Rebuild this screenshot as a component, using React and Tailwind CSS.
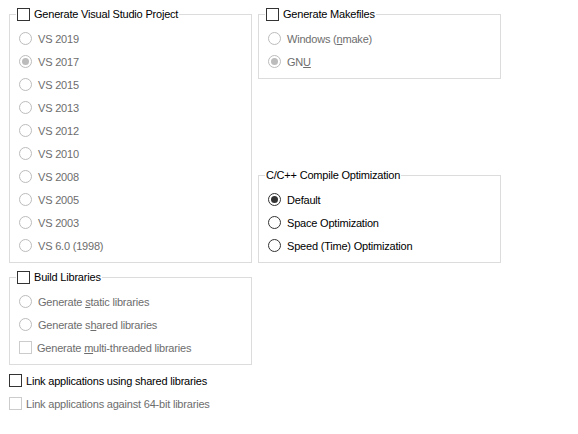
import React from "react";

const Radio = ({ label, checked, disabled }) => (
  <div className="flex items-center h-[23px]">
    <span
      className={`w-[13px] h-[13px] rounded-full border flex items-center justify-center bg-white shrink-0 ${
        disabled ? "border-[#bcbcbc]" : "border-[#333333]"
      }`}
    >
      {checked && (
        <span className={`w-[7px] h-[7px] rounded-full ${disabled ? "bg-[#bcbcbc]" : "bg-[#333333]"}`} />
      )}
    </span>
    <span className={`ml-[6px] whitespace-nowrap ${disabled ? "text-[#6d6d6d]" : "text-black"}`}>{label}</span>
  </div>
);

const Check = ({ label, disabled, gap = "ml-[4px]" }) => (
  <div className="flex items-center">
    <span
      className={`w-[13px] h-[13px] border bg-white shrink-0 ${disabled ? "border-[#cccccc]" : "border-[#333333]"}`}
    />
    <span className={`${gap} whitespace-nowrap ${disabled ? "text-[#6d6d6d]" : "text-black"}`}>{label}</span>
  </div>
);

// fieldset padding moves the legend too, so the inner spacing lives on a div
const GroupBox = ({ title, children, className = "", inner = "" }) => (
  <fieldset className={`border border-[#dcdcdc] ${className}`}>
    <legend className="ml-[6px] px-[1px] h-[14px] leading-[14px]">{title}</legend>
    <div className={`pl-[9px] pt-[6px] ${inner}`}>{children}</div>
  </fieldset>
);

const u = (s) => <span className="underline underline-offset-[1px]">{s}</span>;

export default function App() {
  const vsVersions = [
    ["VS 2019", false],
    ["VS 2017", true],
    ["VS 2015", false],
    ["VS 2013", false],
    ["VS 2012", false],
    ["VS 2010", false],
    ["VS 2008", false],
    ["VS 2005", false],
    ["VS 2003", false],
    ["VS 6.0 (1998)", false],
  ];

  return (
    <div
      className="w-[578px] h-[434px] bg-white text-[11px] leading-[14px] tracking-[-0.2px] pt-[7px] pl-[9px] text-black"
      style={{ fontFamily: '"Liberation Sans", Arial, sans-serif' }}
    >
      <div className="flex gap-[6px]">
        <GroupBox title={<Check label="Generate Visual Studio Project" />} className="w-[243px]" inner="pb-[5px]">
          {vsVersions.map(([v, c]) => (
            <Radio key={v} label={v} checked={c} disabled />
          ))}
        </GroupBox>

        <div className="w-[243px] flex flex-col justify-between">
          <GroupBox title={<Check label="Generate Makefiles" />} inner="pb-[5px]">
            <Radio label={<>Windows ({u("n")}make)</>} disabled />
            <Radio label={<>GN{u("U")}</>} checked disabled />
          </GroupBox>

          <GroupBox title="C/C++ Compile Optimization" inner="pb-[5px]">
            <Radio label="Default" checked />
            <Radio label="Space Optimization" />
            <Radio label="Speed (Time) Optimization" />
          </GroupBox>
        </div>
      </div>

      <GroupBox title={<Check label="Build Libraries" />} className="w-[243px] mt-[7px]" inner="pb-[5px]">
        <Radio label={<>Generate {u("s")}tatic libraries</>} disabled />
        <Radio label={<>Generate s{u("h")}ared libraries</>} disabled />
        <div className="h-[23px] flex items-center">
          <Check label={<>Generate {u("m")}ulti-threaded libraries</>} disabled gap="ml-[5px]" />
        </div>
      </GroupBox>

      <div className="mt-[4px] flex flex-col">
        <div className="h-[23px] flex items-center">
          <Check label="Link applications using shared libraries" />
        </div>
        <div className="h-[23px] flex items-center">
          <Check label="Link applications against 64-bit libraries" disabled />
        </div>
      </div>
    </div>
  );
}
